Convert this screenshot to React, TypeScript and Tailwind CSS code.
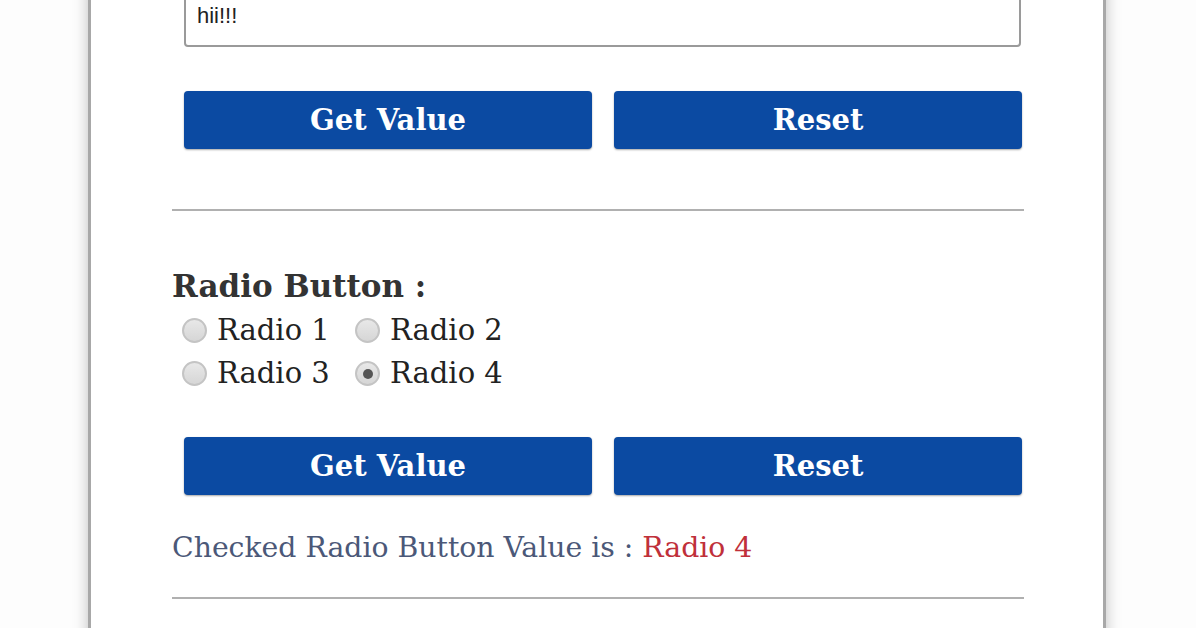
import React, { useState } from 'react';

const serif = { fontFamily: '"DejaVu Serif", "Liberation Serif", serif' };

const ActionButton: React.FC<{ label: string; onClick?: () => void }> = ({ label, onClick }) => (
  <button
    onClick={onClick}
    className="h-[58px] flex-1 rounded-[4px] bg-[#0b4aa2] text-[29px] font-bold leading-none text-white shadow-[0_1px_2px_rgba(0,0,0,0.35)]"
    style={serif}
  >
    {label}
  </button>
);

const RadioItem: React.FC<{ label: string; checked: boolean; onChange: () => void }> = ({ label, checked, onChange }) => (
  <label className="flex items-center">
    <span className="flex h-[25px] w-[25px] items-center justify-center rounded-full border-2 border-[#c4c4c4] bg-gradient-to-b from-[#e8e8e8] to-[#d6d6d6]">
      {checked && <span className="h-[10px] w-[10px] rounded-full bg-[#555]" />}
    </span>
    <input type="radio" className="hidden" checked={checked} onChange={onChange} />
    <span className="ml-[10px] text-[29px] leading-none text-[#222]" style={serif}>
      {label}
    </span>
  </label>
);

export default function App() {
  const [text] = useState('hii!!!');
  const [checked, setChecked] = useState('Radio 4');
  const radios = ['Radio 1', 'Radio 2', 'Radio 3', 'Radio 4'];

  return (
    <div className="h-[628px] w-[1196px] overflow-hidden bg-[#fdfdfd]">
      <div className="ml-[88px] h-[700px] w-[1018px] border-x-[3px] border-[#a8a8a8] bg-white shadow-[0_0_14px_rgba(0,0,0,0.25)]">
        <div className="-mt-[20px] pl-[81px] pr-[79px]">
          {/* Textarea */}
          <div className="ml-[12px] mr-[3px] h-[67px] rounded-[4px] border-2 border-[#9a9a9a] bg-white px-[11px] pt-[23px]">
            <span className="text-[22px] leading-none text-[#222]" style={{ fontFamily: '"Liberation Sans", Arial, sans-serif' }}>
              {text}
            </span>
          </div>

          <div className="ml-[12px] mr-[2px] mt-[44px] flex gap-[22px]">
            <ActionButton label="Get Value" />
            <ActionButton label="Reset" />
          </div>

          <hr className="mt-[60px] border-t-2 border-[#b0b0b0]" />

          {/* Radio group */}
          <div className="mt-[60px] text-[31px] font-bold leading-none text-[#333]" style={serif}>
            Radio Button :
          </div>
          <div className="ml-[10px] mt-[14px] grid grid-cols-[173px_auto] gap-y-[14px]">
            {radios.map((r) => (
              <RadioItem key={r} label={r} checked={checked === r} onChange={() => setChecked(r)} />
            ))}
          </div>

          <div className="ml-[12px] mr-[2px] mt-[49px] flex gap-[22px]">
            <ActionButton label="Get Value" />
            <ActionButton label="Reset" onClick={() => setChecked('')} />
          </div>

          <div className="mt-[39px] text-[28.3px] leading-none text-[#4b5878]" style={serif}>
            Checked Radio Button Value is : <span className="text-[#c0303a]">{checked}</span>
          </div>

          <hr className="mt-[35px] border-t-2 border-[#b0b0b0]" />
        </div>
      </div>
    </div>
  );
}
